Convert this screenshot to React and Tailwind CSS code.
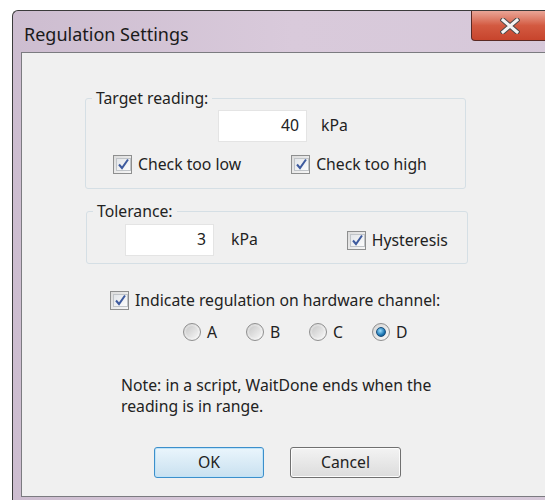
import React, { useState } from 'react'

const font = { fontFamily: '"Noto Sans", "Open Sans", sans-serif' }

function CheckBox({ checked, onChange, label, className = '' }) {
  return (
    <label className={`flex items-center cursor-default ${className}`} onClick={onChange}>
      <span className="w-[19px] h-[19px] border border-[#8e8f8f] bg-gradient-to-br from-[#dcdcdc] to-[#f6f6f6] p-[2px] flex">
        <span className="flex-1 border border-[#c0c4c8] bg-gradient-to-br from-[#e3e6ea] to-[#fbfbfb] flex items-center justify-center">
          {checked && (
            <svg width="13" height="13" viewBox="0 0 13 13">
              <path d="M2 6.5 L5 10 L11 1.5" fill="none" stroke="#3d5a9e" strokeWidth="2" />
            </svg>
          )}
        </span>
      </span>
      <span className="ml-[6px] text-[15.75px] leading-5 text-[#222]">{label}</span>
    </label>
  )
}

function Radio({ selected, onSelect, label }) {
  return (
    <label className="w-[63px] flex items-center cursor-default" onClick={onSelect}>
      <span className="w-[18px] h-[18px] rounded-full border border-[#8f8f8f] bg-gradient-to-br from-[#d4d4d4] to-[#fafafa] flex items-center justify-center">
        {selected ? (
          <span className="w-[10px] h-[10px] rounded-full bg-[radial-gradient(circle_at_40%_35%,#9fe0ff,#1c77b4_60%,#0c3f6c)] border border-[#1a4f7c]" />
        ) : (
          <span className="w-[12px] h-[12px] rounded-full bg-gradient-to-br from-[#c9c9c9] to-[#f4f4f4]" />
        )}
      </span>
      <span className="ml-[6px] text-[15.75px] leading-5 text-[#222]">{label}</span>
    </label>
  )
}

export default function App() {
  const [low, setLow] = useState(true)
  const [high, setHigh] = useState(true)
  const [hyst, setHyst] = useState(true)
  const [indicate, setIndicate] = useState(true)
  const [channel, setChannel] = useState('D')

  return (
    <div className="w-[545px] h-[500px] bg-white overflow-hidden" style={font}>
      {/* Window frame */}
      <div className="ml-[12px] mt-[10px] w-[560px] h-[500px] rounded-tl-[6px] border-l border-t border-[#3b3b3b] bg-gradient-to-r from-[#cdbdd0] via-[#d9cadb] to-[#d6c8d9] flex flex-col">
        {/* Title bar */}
        <div className="h-[41px] flex items-start relative">
          <div className="ml-[11px] mt-[11px] text-[18px] leading-6 text-[#1a1a1a]">Regulation Settings</div>
          <div className="absolute left-[458px] top-0 w-[80px] h-[30px] rounded-b-[4px] border border-t-0 border-[#5a2a24] bg-gradient-to-b from-[#e9a597] via-[#d35a41] to-[#c7442c] flex items-center">
            <svg className="ml-[28px]" width="20" height="16" viewBox="0 0 20 16">
              <path d="M3 2 L17 14 M17 2 L3 14" stroke="#4a4a4a" strokeWidth="5" strokeLinecap="square" />
              <path d="M3 2 L17 14 M17 2 L3 14" stroke="#f4f4f4" strokeWidth="3" strokeLinecap="square" />
            </svg>
          </div>
        </div>

        {/* Client area */}
        <div className="ml-[8px] h-[445px] border border-[#7b7b80] bg-[#f0f0f0] text-[#222]">
          {/* Target reading */}
          <fieldset className="mt-[35px] ml-[63px] w-[381px] h-[101px] border border-[#d5dfe5] rounded-[3px]">
            <legend className="ml-[6px] px-[4px] text-[15.75px] leading-5">Target reading:</legend>
            <div className="flex items-center mt-[2px]">
              <div className="ml-[132px] w-[89px] h-[32px] bg-white border border-[#e4e4e4] text-right pr-[7px] text-[15.75px] leading-[28px]">40</div>
              <span className="ml-[14px] text-[15.75px]">kPa</span>
            </div>
            <div className="flex items-center mt-[12px]">
              <CheckBox className="ml-[27px]" checked={low} onChange={() => setLow(!low)} label="Check too low" />
              <CheckBox className="ml-[50px]" checked={high} onChange={() => setHigh(!high)} label="Check too high" />
            </div>
          </fieldset>

          {/* Tolerance */}
          <fieldset className="mt-[12px] ml-[64px] w-[382px] h-[63px] border border-[#d5dfe5] rounded-[3px]">
            <legend className="ml-[6px] px-[4px] text-[15.75px] leading-5">Tolerance:</legend>
            <div className="flex items-center mt-[3px]">
              <div className="ml-[38px] w-[89px] h-[32px] bg-white border border-[#e4e4e4] text-right pr-[7px] text-[15.75px] leading-[28px]">3</div>
              <span className="ml-[17px] text-[15.75px]">kPa</span>
              <CheckBox className="ml-[89px]" checked={hyst} onChange={() => setHyst(!hyst)} label="Hysteresis" />
            </div>
          </fieldset>

          {/* Hardware channel */}
          <CheckBox className="mt-[26px] ml-[88px]" checked={indicate} onChange={() => setIndicate(!indicate)} label="Indicate regulation on hardware channel:" />
          <div className="flex mt-[12px] ml-[161px]">
            {['A', 'B', 'C', 'D'].map((c) => (
              <Radio key={c} label={c} selected={channel === c} onSelect={() => setChannel(c)} />
            ))}
          </div>

          <p className="mt-[33px] ml-[99px] w-[330px] text-[15.75px] leading-[21px]">
            Note: in a script, WaitDone ends when the reading is in range.
          </p>

          <div className="flex mt-[30px] ml-[132px] gap-[26px]">
            <button className="w-[110px] h-[31px] rounded-[3px] border border-[#3c8fcb] bg-gradient-to-b from-[#eaf5fc] to-[#c9e1f0] text-[15.75px] text-[#222] shadow-[inset_0_0_0_1px_#bfe3f8]">OK</button>
            <button className="w-[111px] h-[31px] rounded-[3px] border border-[#707070] bg-gradient-to-b from-[#f3f3f3] to-[#dcdcdc] text-[15.75px] text-[#222] shadow-[inset_0_0_0_1px_#fcfcfc]">Cancel</button>
          </div>
        </div>
      </div>
    </div>
  )
}
